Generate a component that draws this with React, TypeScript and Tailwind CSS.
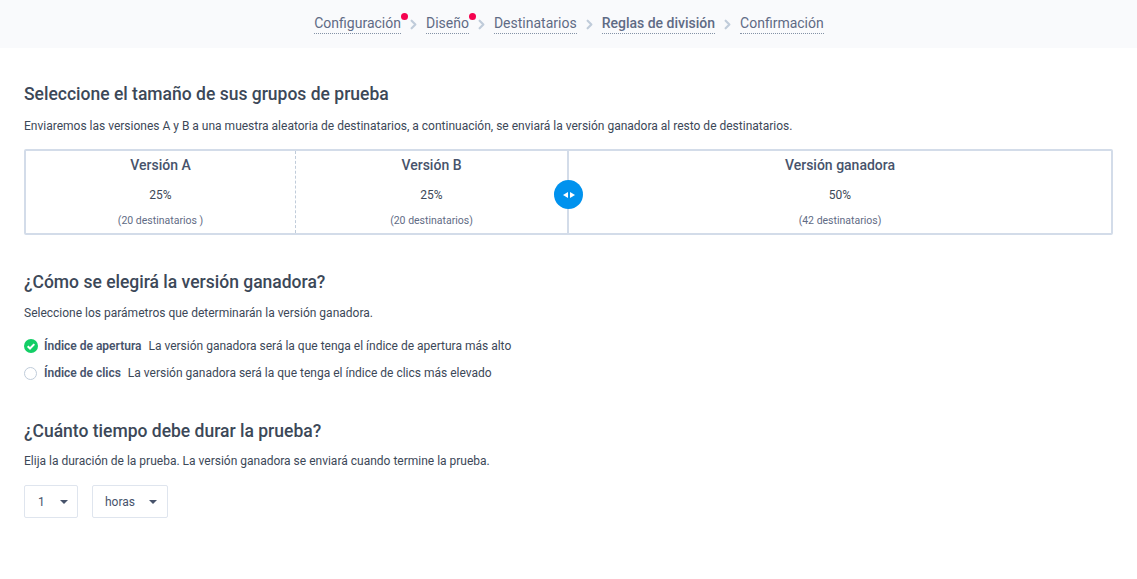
import { ChevronRight } from 'lucide-react';

const steps = [
  { label: 'Configuración', dot: true },
  { label: 'Diseño', dot: true },
  { label: 'Destinatarios' },
  { label: 'Reglas de división', active: true },
  { label: 'Confirmación' }
];

const Header = () => (
  <div className="flex h-12 items-center justify-center bg-[#f9fafc] pl-[1px]">
    {steps.map((step, i) => (
      <div key={step.label} className="flex items-center">
        {i > 0 && (
          <ChevronRight
            className={`h-[15px] w-[15px] text-[#c0ccda] ${i === 1 ? 'mx-[5px]' : i === 2 ? 'mx-[5px]' : 'mx-[5px]'}`}
            strokeWidth={3.5}
          />
        )}
        <span
          className={`relative border-b border-dotted border-[#8492a6] pb-[1px] text-[14px] leading-[17px] text-[#5f6b85] ${
            step.active ? 'font-medium' : ''
          }`}
        >
          {step.label}
          {step.dot && <span className="absolute -right-[7px] -top-[2px] h-[7px] w-[7px] rounded-full bg-[#f5024f]" />}
        </span>
      </div>
    ))}
  </div>
);

const Split = ({ title, pct, count, className }: { title: string; pct: string; count: string; className: string }) => (
  <div className={`flex flex-col items-center ${className}`}>
    <div className="mt-[4px] text-[14px] leading-[20px] font-medium text-[#47536b]">{title}</div>
    <div className="mt-[11px] text-[12px] leading-[18px] text-[#3c4858]">{pct}</div>
    <div className="mt-[8px] text-[10.5px] leading-[18px] text-[#5f6b85]">{count}</div>
  </div>
);

const App = () => {
  return (
    <div className="h-[579px] w-[1137px] overflow-hidden bg-white font-['Roboto',sans-serif]">
      <Header />
      <div className="pl-6 pr-6">
        <h2 className="mt-[34px] text-[17.5px] leading-6 font-medium text-[#3c4858]">
          Seleccione el tamaño de sus grupos de prueba
        </h2>
        <p className="mt-[11px] text-[12px] leading-[18px] text-[#3c4858]">
          Enviaremos las versiones A y B a una muestra aleatoria de destinatarios, a continuación, se enviará la versión
          ganadora al resto de destinatarios.
        </p>

        <div className="relative mt-[14px] flex h-[86px] w-[1089px] rounded-[2px] border-2 border-[#d3dce9]">
          <Split title="Versión A" pct="25%" count="(20 destinatarios )" className="w-[270px] border-r border-dashed border-[#c0ccda]" />
          <Split title="Versión B" pct="25%" count="(20 destinatarios)" className="w-[273px] border-r-2 border-[#d3dce9]" />
          <Split title="Versión ganadora" pct="50%" count="(42 destinatarios)" className="flex-1" />
          <div className="absolute left-[528px] top-[29px] flex h-[29px] w-[29px] items-center justify-center gap-[2px] rounded-full bg-[#0092ee]">
            <svg width="5" height="6" viewBox="0 0 5 6"><path d="M5 0v6L0 3z" fill="#fff" /></svg>
            <svg width="5" height="6" viewBox="0 0 5 6"><path d="M0 0v6l5-3z" fill="#fff" /></svg>
          </div>
        </div>

        <h2 className="mt-[35px] text-[17.5px] leading-6 font-medium text-[#3c4858]">¿Cómo se elegirá la versión ganadora?</h2>
        <p className="mt-[10px] text-[12px] leading-[18px] text-[#3c4858]">
          Seleccione los parámetros que determinarán la versión ganadora.
        </p>

        <div className="mt-[15px] flex h-[18px] items-center text-[12px] text-[#3c4858]">
          <svg width="14" height="14" viewBox="0 0 14 14" className="mr-[6px]">
            <circle cx="7" cy="7" r="7" fill="#13ce66" />
            <path d="M3.7 7.2l2.3 2.3 4.3-4.4" fill="none" stroke="#fff" strokeWidth="2" />
          </svg>
          <span className="font-semibold text-[#47536b]">Índice de apertura</span>
          <span className="ml-[7px]">La versión ganadora será la que tenga el índice de apertura más alto</span>
        </div>
        <div className="mt-[9px] flex h-[18px] items-center text-[12px] text-[#3c4858]">
          <span className="mr-[7px] h-[13px] w-[13px] rounded-full border border-[#c0ccda]" />
          <span className="font-semibold text-[#47536b]">Índice de clics</span>
          <span className="ml-[7px]">La versión ganadora será la que tenga el índice de clics más elevado</span>
        </div>

        <h2 className="mt-[37px] text-[17.5px] leading-6 font-medium text-[#3c4858]">¿Cuánto tiempo debe durar la prueba?</h2>
        <p className="mt-[9px] text-[12px] leading-[18px] text-[#3c4858]">
          Elija la duración de la prueba. La versión ganadora se enviará cuando termine la prueba.
        </p>

        <div className="mt-[15px] flex gap-[14px] text-[12px] text-[#47536b]">
          <div className="flex h-[33px] w-[54px] items-center rounded-[2px] border border-[#dfe5ee] pl-[13px]">
            1
            <span className="ml-[15px] h-0 w-0 border-x-[4px] border-t-[4px] border-x-transparent border-t-[#47536b]" />
          </div>
          <div className="flex h-[33px] w-[76px] items-center rounded-[2px] border border-[#dfe5ee] pl-[12px]">
            horas
            <span className="ml-[14px] h-0 w-0 border-x-[4px] border-t-[4px] border-x-transparent border-t-[#47536b]" />
          </div>
        </div>
      </div>
    </div>
  );
};

export default App;
